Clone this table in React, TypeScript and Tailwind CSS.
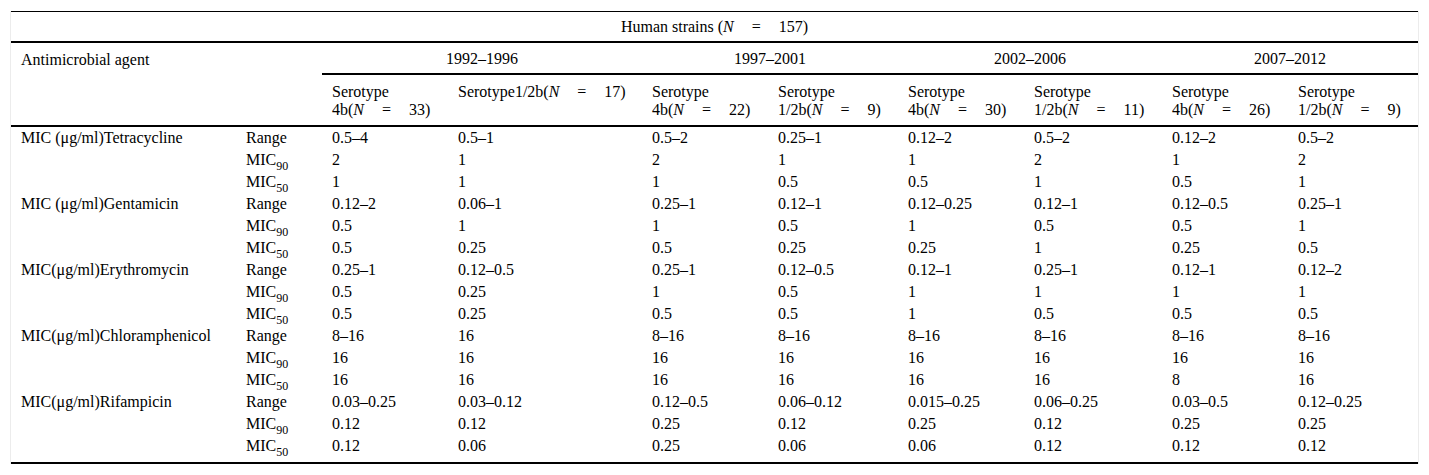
const rows: { agent: string; stat: "Range" | "90" | "50"; vals: string[] }[] = [];

const data: { agent: string; range: string[]; mic90: string[]; mic50: string[] }[] = [
  {
    agent: "MIC (μg/ml)Tetracycline",
    range: ["0.5–4", "0.5–1", "0.5–2", "0.25–1", "0.12–2", "0.5–2", "0.12–2", "0.5–2"],
    mic90: ["2", "1", "2", "1", "1", "2", "1", "2"],
    mic50: ["1", "1", "1", "0.5", "0.5", "1", "0.5", "1"],
  },
  {
    agent: "MIC (μg/ml)Gentamicin",
    range: ["0.12–2", "0.06–1", "0.25–1", "0.12–1", "0.12–0.25", "0.12–1", "0.12–0.5", "0.25–1"],
    mic90: ["0.5", "1", "1", "0.5", "1", "0.5", "0.5", "1"],
    mic50: ["0.5", "0.25", "0.5", "0.25", "0.25", "1", "0.25", "0.5"],
  },
  {
    agent: "MIC(μg/ml)Erythromycin",
    range: ["0.25–1", "0.12–0.5", "0.25–1", "0.12–0.5", "0.12–1", "0.25–1", "0.12–1", "0.12–2"],
    mic90: ["0.5", "0.25", "1", "0.5", "1", "1", "1", "1"],
    mic50: ["0.5", "0.25", "0.5", "0.5", "1", "0.5", "0.5", "0.5"],
  },
  {
    agent: "MIC(μg/ml)Chloramphenicol",
    range: ["8–16", "16", "8–16", "8–16", "8–16", "8–16", "8–16", "8–16"],
    mic90: ["16", "16", "16", "16", "16", "16", "16", "16"],
    mic50: ["16", "16", "16", "16", "16", "16", "8", "16"],
  },
  {
    agent: "MIC(μg/ml)Rifampicin",
    range: ["0.03–0.25", "0.03–0.12", "0.12–0.5", "0.06–0.12", "0.015–0.25", "0.06–0.25", "0.03–0.5", "0.12–0.25"],
    mic90: ["0.12", "0.12", "0.25", "0.12", "0.25", "0.12", "0.25", "0.25"],
    mic50: ["0.12", "0.06", "0.25", "0.06", "0.06", "0.12", "0.12", "0.12"],
  },
];

data.forEach((d) => {
  rows.push({ agent: d.agent, stat: "Range", vals: d.range });
  rows.push({ agent: "", stat: "90", vals: d.mic90 });
  rows.push({ agent: "", stat: "50", vals: d.mic50 });
});

function N({ n }: { n: string }) {
  return (
    <>
      <i>N</i>
      <span className="mx-[18px]">=</span>
      {n})
    </>
  );
}

function Stat({ s }: { s: "Range" | "90" | "50" }) {
  if (s === "Range") return <>Range</>;
  return (
    <>
      MIC
      <span className="relative top-[5px] text-[12px] leading-none">{s}</span>
    </>
  );
}

const years = ["1992–1996", "1997–2001", "2002–2006", "2007–2012"];

const sero = "border-b-2 border-black pl-[10px] pt-[8px] text-left align-top font-normal leading-[18px]";

export default function App() {
  return (
    <div className="h-[475px] w-[1429px] bg-white pl-[10px] pt-[11px] font-['Liberation_Serif',serif] text-[16px] text-black">
      <div className="w-[1409px] border-x border-[#ececec]">
        <table className="w-[1407px] table-fixed border-separate border-spacing-0">
          <colgroup>
            <col className="w-[225px]" />
            <col className="w-[86px]" />
            <col className="w-[126px]" />
            <col className="w-[194px]" />
            <col className="w-[126px]" />
            <col className="w-[130px]" />
            <col className="w-[126px]" />
            <col className="w-[138px]" />
            <col className="w-[126px]" />
            <col className="w-[130px]" />
          </colgroup>
          <thead>
            <tr>
              <th
                colSpan={10}
                className="h-[32px] border-t border-b-2 border-black text-center align-middle font-normal leading-[18px]"
              >
                Human strains (<N n="157" />
              </th>
            </tr>
            <tr>
              <th
                colSpan={2}
                rowSpan={2}
                className="border-b-2 border-black pl-[10px] pt-[8px] text-left align-top font-normal leading-[18px]"
              >
                Antimicrobial agent
              </th>
              {years.map((y) => (
                <th
                  key={y}
                  colSpan={2}
                  className="h-[32px] border-b-2 border-black pt-[1px] text-center align-middle font-normal leading-[18px]"
                >
                  {y}
                </th>
              ))}
            </tr>
            <tr>
              <th className={`h-[52px] ${sero}`}>
                Serotype
                <br />
                4b(<N n="33" />
              </th>
              <th className={sero}>
                Serotype1/2b(<N n="17" />
              </th>
              <th className={sero}>
                Serotype
                <br />
                4b(<N n="22" />
              </th>
              <th className={sero}>
                Serotype
                <br />
                1/2b(<N n="9" />
              </th>
              <th className={sero}>
                Serotype
                <br />
                4b(<N n="30" />
              </th>
              <th className={sero}>
                Serotype
                <br />
                1/2b(<N n="11" />
              </th>
              <th className={sero}>
                Serotype
                <br />
                4b(<N n="26" />
              </th>
              <th className={sero}>
                Serotype
                <br />
                1/2b(<N n="9" />
              </th>
            </tr>
          </thead>
          <tbody>
            {rows.map((r, i) => {
              const last = i === rows.length - 1;
              const cell = last
                ? "h-[27px] border-b-2 border-black pb-[5px] pl-[10px] align-top leading-[22px]"
                : "h-[22px] pl-[10px] align-top leading-[22px]";
              return (
                <tr key={i}>
                  <td className={cell}>{r.agent}</td>
                  <td className={cell}>
                    <Stat s={r.stat} />
                  </td>
                  {r.vals.map((v, j) => (
                    <td key={j} className={cell}>
                      {v}
                    </td>
                  ))}
                </tr>
              );
            })}
          </tbody>
        </table>
      </div>
    </div>
  );
}
